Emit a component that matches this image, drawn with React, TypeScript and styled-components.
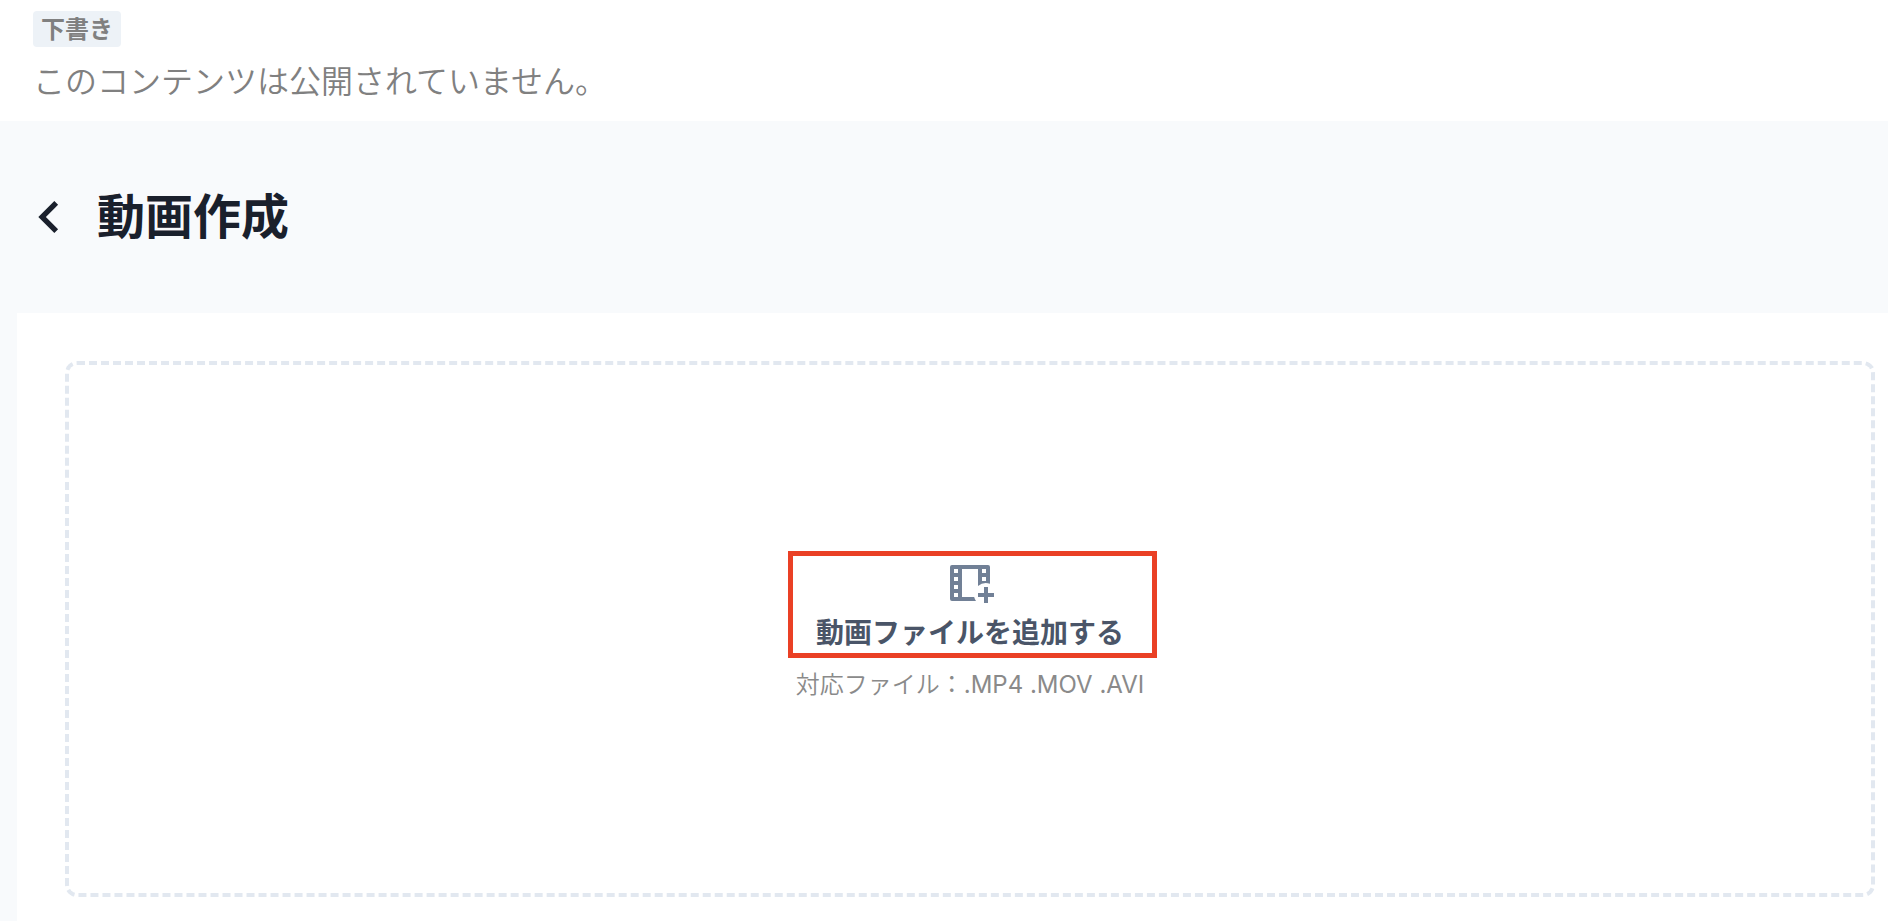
import React from "react";
import styled, { createGlobalStyle } from "styled-components";

const GlobalStyle = createGlobalStyle`
  *, *::before, *::after { box-sizing: border-box; }
  body {
    margin: 0;
    background: #f8fafc;
    font-family: Inter, "Noto Sans CJK JP", sans-serif;
  }
`;

const Page = styled.div`
  display: flex;
  flex-direction: column;
  min-height: 100vh;
`;

const StatusBar = styled.header`
  display: flex;
  flex-direction: column;
  align-items: flex-start;
  gap: 11px;
  padding: 11px 33px 15px;
  background: #fff;
  color: #808080;
`;

const Badge = styled.span`
  padding: 2px 8px 0;
  border-radius: 4px;
  background: #edf2f7;
  font-size: 24px;
  font-weight: 700;
  line-height: 34px;
`;

const StatusText = styled.p`
  margin: 0;
  font-size: 32px;
  font-weight: 350;
  line-height: 48px;
`;

const TitleBar = styled.div`
  display: flex;
  align-items: center;
  gap: 16px;
  height: 192px;
  padding: 0 17px;
  color: #1a202c;
`;

const IconButton = styled.button`
  display: flex;
  padding: 0;
  border: 0;
  background: none;
  color: inherit;
  cursor: pointer;
`;

const Title = styled.h1`
  margin: 0;
  font-size: 48px;
  font-weight: 700;
  line-height: 72px;
`;

const Card = styled.main`
  display: flex;
  flex: 1;
  flex-direction: column;
  margin-left: 17px;
  padding: 48px 13px 24px 48px;
  background: #fff;
`;

const DropZone = styled.section`
  display: flex;
  flex: 1;
  flex-direction: column;
  align-items: center;
  justify-content: center;
  gap: 12px;
  min-height: 536px;
  border: 4px dashed #e2e8f0;
  border-radius: 12px;
`;

const AddButton = styled.button`
  position: relative;
  display: flex;
  flex-direction: column;
  align-items: center;
  padding: 0;
  border: 0;
  background: none;
  color: #4a5568;
  font-family: inherit;
  font-size: 28px;
  font-weight: 700;
  line-height: 52px;
  cursor: pointer;

  svg { color: #718096; }
`;

const Highlight = styled.span`
  position: absolute;
  inset: -8px -33px 1px -28px;
  border: 5px solid #ea4025;
  pointer-events: none;
`;

const Hint = styled.p`
  margin: 0;
  color: #8a8a8a;
  font-size: 24px;
  font-weight: 350;
  line-height: 28px;
`;

const Formats = styled.span`
  font-weight: 400;
`;

const BackIcon = () => (
  <svg width="64" height="64" viewBox="0 0 24 24" fill="currentColor" aria-hidden="true">
    <path d="M15.41 7.41 14 6l-6 6 6 6 1.41-1.41L10.83 12z" />
  </svg>
);

const FilmAddIcon = () => (
  <svg width="48" height="48" viewBox="0 0 24 24" fill="currentColor" aria-hidden="true">
    <path
      fillRule="evenodd"
      d="M3 3h18a1 1 0 0 1 1 1v8.34A6 6 0 0 0 16 13.53V5H8v14h6.08A6 6 0 0 0 15 21H3a1 1 0 0 1-1-1V4a1 1 0 0 1 1-1zM4 5v2h2V5zM4 9v2h2V9zM4 13v2h2v-2zM4 17v2h2v-2zM18 5v2h2V5zM18 9v2h2V9z"
    />
    <path d="M19 14h2v3h3v2h-3v3h-2v-3h-3v-2h3z" />
  </svg>
);

export default function App() {
  return (
    <Page>
      <GlobalStyle />
      <StatusBar>
        <Badge>下書き</Badge>
        <StatusText>このコンテンツは公開されていません。</StatusText>
      </StatusBar>
      <TitleBar>
        <IconButton type="button" aria-label="戻る">
          <BackIcon />
        </IconButton>
        <Title>動画作成</Title>
      </TitleBar>
      <Card>
        <DropZone>
          <AddButton type="button">
            <FilmAddIcon />
            動画ファイルを追加する
            <Highlight />
          </AddButton>
          <Hint>
            対応ファイル：<Formats>.MP4 .MOV .AVI</Formats>
          </Hint>
        </DropZone>
      </Card>
    </Page>
  );
}
